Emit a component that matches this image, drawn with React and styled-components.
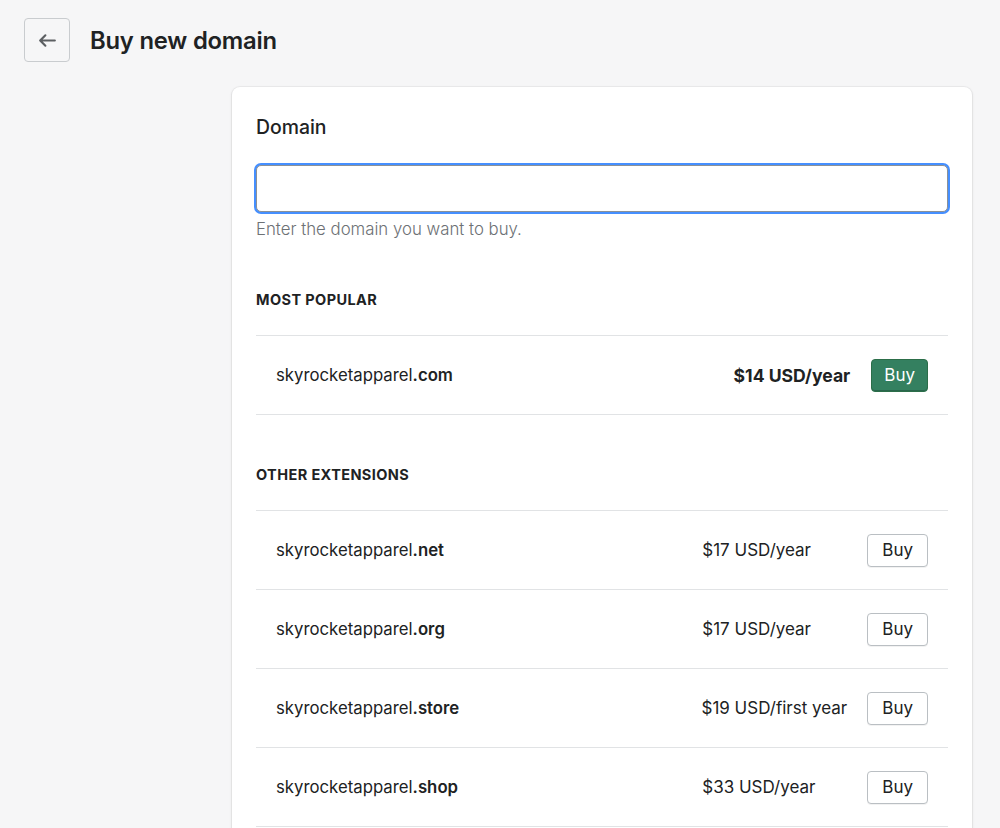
import React from 'react';
import styled, { createGlobalStyle } from 'styled-components';

const GlobalStyle = createGlobalStyle`
  html, body {
    margin: 0;
    padding: 0;
    background: #f6f6f7;
    font-family: Inter, "Noto Sans", "Liberation Sans", sans-serif;
    color: #202223;
    overflow: hidden;
  }
`;

const Page = styled.div`
  height: 828px;
  padding: 18px 28px 0 24px;
  box-sizing: border-box;
`;

const Header = styled.div`
  display: flex;
  align-items: center;
  gap: 20px;
  height: 44px;
`;

const BackButton = styled.button`
  width: 46px;
  height: 44px;
  display: flex;
  align-items: center;
  justify-content: center;
  background: #f6f6f7;
  border: 1px solid #c9cccf;
  border-radius: 4px;
  padding: 0;
  color: #5c5f62;
`;

const Title = styled.h1`
  margin: 0;
  font-size: 23.8px;
  font-weight: 600;
  letter-spacing: -0.2px;
`;

const Layout = styled.div`
  display: flex;
  justify-content: flex-end;
  margin-top: 25px;
`;

const Card = styled.div`
  width: 740px;
  background: #fff;
  border-radius: 8px;
  box-shadow: 0 0 0 1px rgba(63, 63, 68, 0.05), 0 1px 3px rgba(63, 63, 68, 0.15);
  padding: 26px 24px 0;
  box-sizing: border-box;
  min-height: 760px;
`;

const Label = styled.div`
  font-size: 19.4px;
  font-weight: 500;
  line-height: 28px;
  margin-bottom: 24px;
`;

const Input = styled.input`
  display: block;
  width: 100%;
  height: 47px;
  box-sizing: border-box;
  border: 1px solid #8c9196;
  border-radius: 5px;
  box-shadow: 0 0 0 2px #458fff;
  outline: none;
  font: inherit;
  padding: 0 12px;
`;

const Help = styled.div`
  margin-top: 6px;
  font-size: 16.8px;
  font-weight: 300;
  color: #6d7175;
  line-height: 22px;
`;

const SectionTitle = styled.div`
  font-size: 14.5px;
  font-weight: 700;
  letter-spacing: 0.4px;
  text-transform: uppercase;
  padding: 50px 0 25px;
  line-height: 20px;
  border-bottom: 1px solid #e1e3e5;
`;

const Row = styled.div`
  display: flex;
  align-items: center;
  height: 78px;
  padding: 0 20px;
  border-bottom: 1px solid #e1e3e5;
  font-size: 16.75px;
`;

const Name = styled.div`
  flex: 1;
  b { font-weight: 600; }
`;

const Price = styled.div`
  font-weight: ${p => p.$strong ? 700 : 400};
  font-size: ${p => p.$strong ? '17.6px' : '17px'};
  min-width: ${p => p.$strong ? 'auto' : '145px'};
  margin-right: ${p => p.$strong ? '21px' : '20px'};
`;

const BuyButton = styled.button`
  font: inherit;
  font-size: 17px;
  height: 33px;
  padding: 0 ${p => p.$primary ? '12px' : '14px'};
  border-radius: 4px;
  border: 1px solid ${p => p.$primary ? '#2c6e49' : '#babfc3'};
  background: ${p => p.$primary ? '#348060' : '#fff'};
  color: ${p => p.$primary ? '#fff' : '#202223'};
  box-shadow: ${p => p.$primary ? 'inset 0 -1px 0 rgba(0,0,0,0.2)' : '0 1px 0 rgba(0,0,0,0.05)'};
`;

const others = [
  ['net', '$17 USD/year'],
  ['org', '$17 USD/year'],
  ['store', '$19 USD/first year'],
  ['shop', '$33 USD/year'],
];

export default function App() {
  return (
    <>
      <GlobalStyle />
      <Page>
        <Header>
          <BackButton aria-label="Back">
            <svg width="21" height="21" viewBox="0 0 20 20" fill="currentColor">
              <path d="M17 9H5.414l3.293-3.293a.999.999 0 1 0-1.414-1.414l-5 5a.999.999 0 0 0 0 1.414l5 5a.997.997 0 0 0 1.414 0 .999.999 0 0 0 0-1.414L5.414 11H17a1 1 0 1 0 0-2z" />
            </svg>
          </BackButton>
          <Title>Buy new domain</Title>
        </Header>
        <Layout>
          <Card>
            <Label>Domain</Label>
            <Input />
            <Help>Enter the domain you want to buy.</Help>
            <SectionTitle>Most popular</SectionTitle>
            <Row>
              <Name>skyrocketapparel<b>.com</b></Name>
              <Price $strong>$14 USD/year</Price>
              <BuyButton $primary>Buy</BuyButton>
            </Row>
            <SectionTitle>Other extensions</SectionTitle>
            {others.map(([ext, price]) => (
              <Row key={ext}>
                <Name>skyrocketapparel<b>.{ext}</b></Name>
                <Price>{price}</Price>
                <BuyButton>Buy</BuyButton>
              </Row>
            ))}
          </Card>
        </Layout>
      </Page>
    </>
  );
}
